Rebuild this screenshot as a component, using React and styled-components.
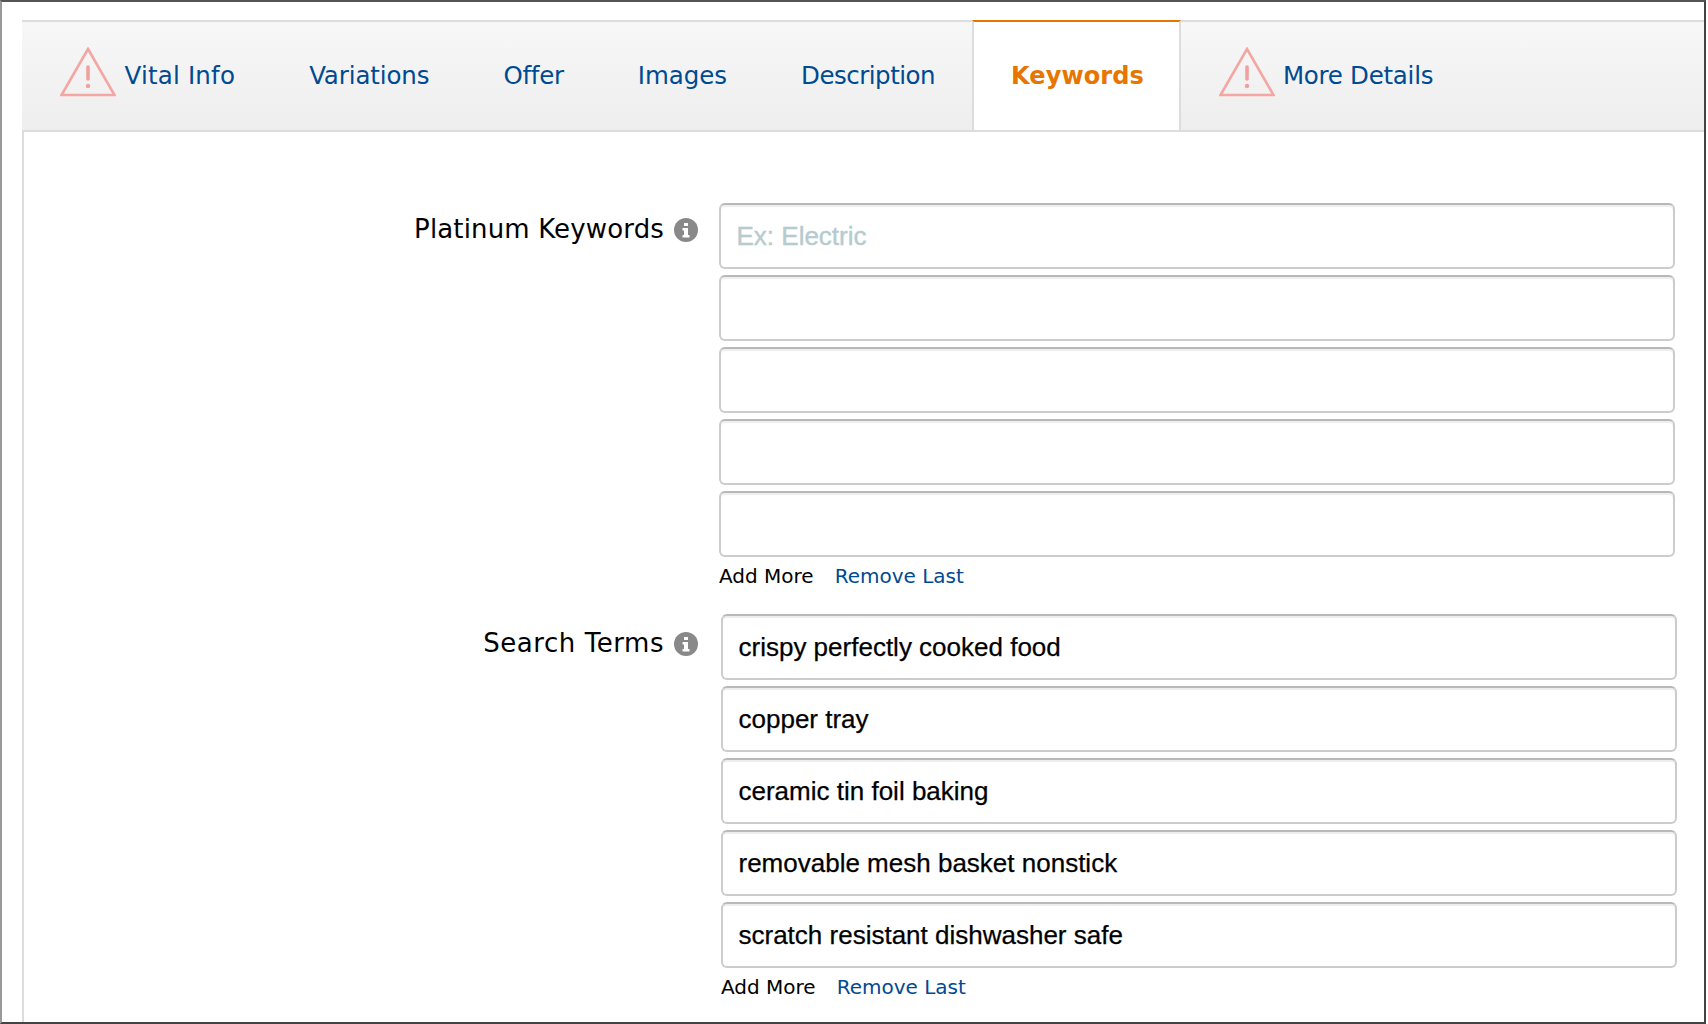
import React from "react";
import styled, { createGlobalStyle } from "styled-components";

const Global = createGlobalStyle`
  html, body { margin: 0; padding: 0; background: #fff; }
  body { font-family: "DejaVu Sans", Verdana, sans-serif; color: #000; }
  * { box-sizing: border-box; }
`;

const Frame = styled.div`
  width: 1706px;
  height: 1024px;
  overflow: hidden;
  border-top: 2px solid #555;
  border-left: 2px solid #999;
  border-right: 2px solid #444;
  border-bottom: 2px solid #444;
  padding: 18px 0 0 20px;
`;

const Panel = styled.div`
  height: 100%;
  border-left: 2px solid #ddd;
`;

const TabBar = styled.nav`
  display: flex;
  height: 112px;
  margin-left: -2px;
  padding-left: 2px;
  border-top: 2px solid #ddd;
  border-bottom: 2px solid #ddd;
  background: linear-gradient(#f7f7f7, #eeeeee);
`;

const Tab = styled.a`
  display: flex;
  align-items: center;
  gap: ${(p) => p.$iconGap || 8.5}px;
  padding: 0 37px 2px ${(p) => p.$lead || 37}px;
  font-size: 24.5px;
  letter-spacing: ${(p) => p.$track || 0}px;
  color: #004a91;
  white-space: nowrap;
`;

const ActiveTab = styled(Tab)`
  position: relative;
  top: -2px;
  height: 110px;
  padding: 0 35px 0 37px;
  background: #fff;
  border-top: 2px solid #e77600;
  border-left: 2px solid #ddd;
  border-right: 2px solid #ddd;
  color: #e77600;
  font-weight: 700;
  font-size: 24px;
`;

const WarningMark = styled.svg`
  display: block;
  flex: none;
  margin-bottom: 6px;
`;

const Form = styled.div`
  display: flex;
  flex-direction: column;
  padding-top: 71px;
`;

const Section = styled.section`
  display: grid;
  grid-template-columns: ${(p) => p.$labelWidth}px 956px;
  column-gap: 21px;
  margin-bottom: ${(p) => p.$gap || 0}px;
`;

const LabelCell = styled.div`
  display: flex;
  justify-content: flex-end;
  align-items: center;
  align-self: start;
  gap: 10px;
  height: ${(p) => p.$height}px;
  padding-right: ${(p) => p.$inset || 0}px;
  font-size: 26px;
  letter-spacing: ${(p) => p.$track || 0}px;
  white-space: nowrap;
`;

const InfoMark = styled.svg`
  display: block;
  flex: none;
  margin-top: 2px;
`;

const Fields = styled.div`
  display: flex;
  flex-direction: column;
  gap: 6px;
`;

const Field = styled.input`
  display: block;
  width: 100%;
  height: 66px;
  padding: 0 15.5px;
  border: 2px solid #cccccc;
  border-top-color: #b9b9b9;
  border-radius: 6px;
  box-shadow: inset 0 2px 1px #eeeeee;
  outline: none;
  background: #fff;
  font-family: "Liberation Sans", Arial, sans-serif;
  font-size: 26px;
  -webkit-text-stroke: 0.25px currentColor;
  color: #000;
  &::placeholder { color: #b6cbce; opacity: 1; -webkit-text-stroke: 0.4px #b6cbce; }
`;

const Actions = styled.div`
  display: flex;
  gap: 21px;
  padding-top: 1px;
  font-size: 20px;
  line-height: 24px;
`;

const AddLink = styled.a`
  color: #000;
`;

const RemoveLink = styled.a`
  color: #004a91;
`;

const Warning = () => (
  <WarningMark width="56" height="50" viewBox="0 0 56 50" fill="none">
    <path d="M28 2 L54.5 48 H1.5 Z" stroke="#f4a6a2" strokeWidth="2.6" strokeLinejoin="miter" />
    <path d="M28 20 V32" stroke="#f2a09c" strokeWidth="3.6" strokeLinecap="round" />
    <circle cx="28" cy="39" r="2.2" fill="#f2a09c" />
  </WarningMark>
);

const Info = () => (
  <InfoMark width="24" height="24" viewBox="0 0 24 24">
    <circle cx="12" cy="12" r="12" fill="#898989" />
    <path fill="#fff" d="M10 5h4v3h-4z M8.500 10h5.500v7h1.500v2.500h-7V17h1.500v-4.500h-1.500z" />
  </InfoMark>
);

const platinum = ["", "", "", "", ""];
const terms = [
  "crispy perfectly cooked food",
  "copper tray",
  "ceramic tin foil baking",
  "removable mesh basket nonstick",
  "scratch resistant dishwasher safe",
];

export default function App() {
  return (
    <Frame>
      <Global />
      <Panel>
        <TabBar>
          <Tab $lead={36} $track={0.2}><Warning />Vital Info</Tab>
          <Tab $track={-0.12}>Variations</Tab>
          <Tab $track={-0.25}>Offer</Tab>
          <Tab $track={-0.05}>Images</Tab>
          <Tab $track={-0.5}>Description</Tab>
          <ActiveTab $track={0.1}>Keywords</ActiveTab>
          <Tab $lead={38} $iconGap={8} $track={-0.27}><Warning />More Details</Tab>
        </TabBar>
        <Form>
          <Section $labelWidth={674} $gap={26}>
            <LabelCell $height={52} $track={0.15}>Platinum Keywords<Info /></LabelCell>
            <Fields>
              {platinum.map((v, i) => (
                <Field key={i} readOnly defaultValue={v} placeholder={i === 0 ? "Ex: Electric" : undefined} />
              ))}
              <Actions>
                <AddLink>Add More</AddLink>
                <RemoveLink>Remove Last</RemoveLink>
              </Actions>
            </Fields>
          </Section>
          <Section $labelWidth={676}>
            <LabelCell $height={57} $inset={2} $track={0.55}>Search Terms<Info /></LabelCell>
            <Fields>
              {terms.map((v) => (
                <Field key={v} readOnly defaultValue={v} />
              ))}
              <Actions>
                <AddLink>Add More</AddLink>
                <RemoveLink>Remove Last</RemoveLink>
              </Actions>
            </Fields>
          </Section>
        </Form>
      </Panel>
    </Frame>
  );
}
